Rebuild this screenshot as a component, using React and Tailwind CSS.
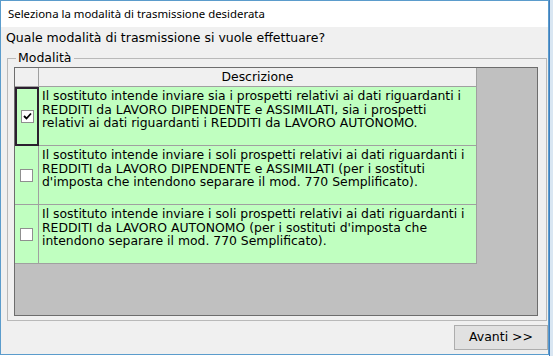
import React from "react";

const rows = [
  {
    checked: true,
    lines: [
      "Il sostituto intende inviare sia i prospetti relativi ai dati riguardanti i",
      "REDDITI da LAVORO DIPENDENTE e ASSIMILATI, sia i prospetti",
      "relativi ai dati riguardanti i REDDITI da LAVORO AUTONOMO.",
    ],
  },
  {
    checked: false,
    lines: [
      "Il sostituto intende inviare i soli prospetti relativi ai dati riguardanti i",
      "REDDITI da LAVORO DIPENDENTE e ASSIMILATI (per i sostituti",
      "d'imposta che intendono separare il mod. 770 Semplificato).",
    ],
  },
  {
    checked: false,
    lines: [
      "Il sostituto intende inviare i soli prospetti relativi ai dati riguardanti i",
      "REDDITI da LAVORO AUTONOMO (per i sostituti d'imposta che",
      "intendono separare il mod. 770 Semplificato).",
    ],
  },
];

function CheckBox({ checked }) {
  return (
    <div className="w-[13px] h-[13px] bg-white border border-[#8f8f8f] flex items-center justify-center">
      {checked && (
        <svg width="9" height="9" viewBox="0 0 9 9">
          <path d="M1 4 L3.5 6.5 L8 1.5" stroke="#000" strokeWidth="1.8" fill="none" />
        </svg>
      )}
    </div>
  );
}

export default function App() {
  const grid = "font-['DejaVu_Sans',sans-serif] text-[12.4px] leading-[13.6px] text-black";
  return (
    <div className="w-[553px] h-[356px] bg-white flex overflow-hidden">
      <div className="w-[549px] h-[355px] border border-[#5b9ccc] flex flex-col bg-[#f0f0f0] font-['Noto_Sans',sans-serif]">
        <div className="h-[26px] bg-white pl-[7px] flex items-center text-[11.4px] text-black">
          Seleziona la modalità di trasmissione desiderata
        </div>
        <div className="h-[22px] pl-[5px] flex items-center text-[12.5px] text-black font-['DejaVu_Sans',sans-serif]">
          Quale modalità di trasmissione si vuole effettuare?
        </div>
        <div className="relative ml-[6px] mr-[1px] mt-[9px] h-[263px] border border-[#b9b9b9] pt-[8px] pl-[6px] pr-[8px] pb-[4px] flex">
          <div className="absolute -top-[9px] left-[8px] px-[2px] bg-[#f0f0f0] text-[12.5px] leading-[16px] font-['DejaVu_Sans',sans-serif]">
            Modalità
          </div>
          <div className={`flex-1 border border-[#6d6d6d] bg-[#c0c0c0] flex flex-col ${grid}`}>
            <div className="flex h-[19px]">
              <div className="w-[24px] bg-[#f0f0f0] border-r border-b border-[#a0a0a0]" />
              <div className="w-[438px] bg-[#f0f0f0] border-r border-b border-[#a0a0a0] flex items-center justify-center">
                Descrizione
              </div>
            </div>
            {rows.map((r, i) => (
              <div key={i} className="flex h-[59px]">
                <div
                  className={`w-[24px] bg-[#c0ffc0] flex items-center justify-center ${
                    r.checked ? "border-2 border-[#2b1f2f]" : "border-r border-b border-[#a0a0a0]"
                  }`}
                >
                  <CheckBox checked={r.checked} />
                </div>
                <div className="w-[438px] bg-[#c0ffc0] border-r border-b border-[#a0a0a0] pl-[3px] pt-[2px]">
                  {r.lines.map((l, j) => (
                    <div key={j} className="whitespace-nowrap">
                      {l}
                    </div>
                  ))}
                </div>
              </div>
            ))}
          </div>
        </div>
        <div className="flex justify-end pt-[4px]">
          <div className="w-[94px] h-[25px] border border-[#adadad] bg-[#e1e1e1] flex items-center justify-center text-[12.5px] font-['DejaVu_Sans',sans-serif]">
            Avanti &gt;&gt;
          </div>
        </div>
      </div>
      <div className="flex-1 bg-[#d9e6f2] border-l border-[#3f7fbf]" />
    </div>
  );
}
